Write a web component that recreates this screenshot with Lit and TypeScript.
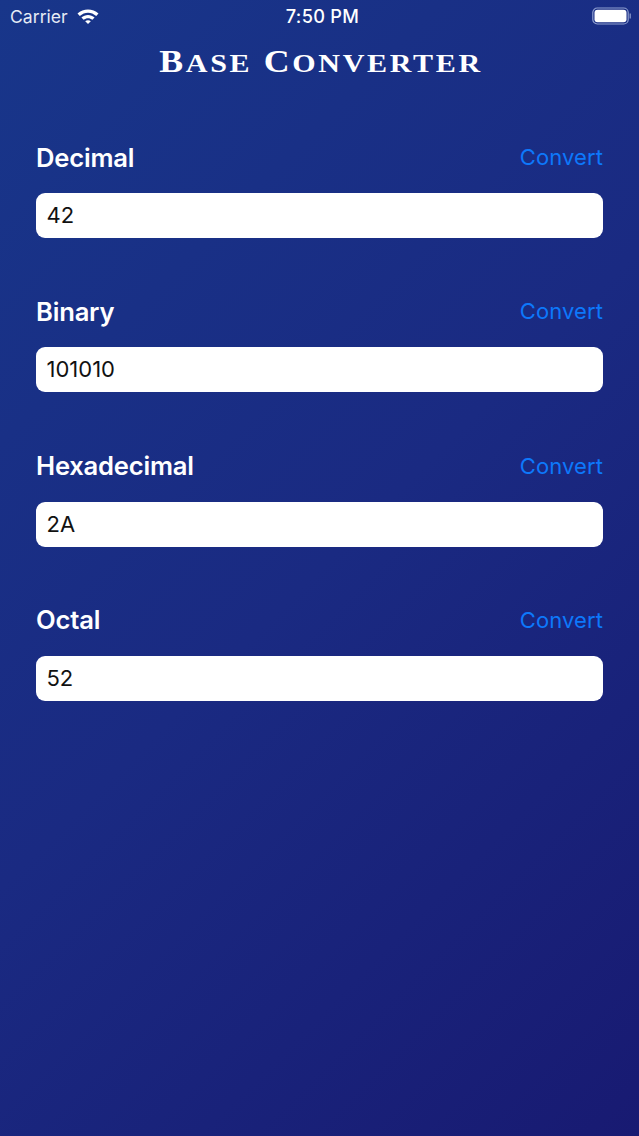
import { LitElement, html, css } from "lit";
import { customElement } from "lit/decorators.js";

const rows = [
  ["Decimal", "42"],
  ["Binary", "101010"],
  ["Hexadecimal", "2A"],
  ["Octal", "52"],
];

@customElement("app-root")
export class AppRoot extends LitElement {
  static styles = css`
    :host {
      display: block;
      width: 639px;
      height: 1136px;
      overflow: hidden;
      background: linear-gradient(135deg, #18368a 0%, #1a2a82 50%, #181a72 100%);
      font-family: Inter, "Liberation Sans", sans-serif;
      color: #fff;
    }
    .status {
      height: 32px;
      display: grid;
      grid-template-columns: 1fr auto 1fr;
      align-items: center;
      padding: 0 8px 0 10px;
      box-sizing: border-box;
    }
    .left { display: flex; align-items: center; gap: 9px; color: #e6ebf5; font-size: 17.6px; }
    .time { font-weight: 500; font-size: 18.2px; letter-spacing: 0.3px; margin-left: 4px; }
    .right { display: flex; justify-content: flex-end; }
    .title {
      margin: 12px 0 0;
      height: 36px;
      line-height: 35px;
      text-align: center;
      font-family: "Liberation Serif", serif;
      font-size: 31px;
      font-weight: 700;
      letter-spacing: 2.3px;
      transform: translateX(1.5px) scaleX(1.155);
      white-space: nowrap;
    }
    .small { font-size: 26px; }
    .form {
      display: flex;
      flex-direction: column;
      gap: 55.3px;
      padding: 59px 36px 0;
    }
    .head {
      height: 36px;
      display: flex;
      justify-content: space-between;
      align-items: center;
    }
    .label { font-size: 25.6px; font-weight: 600; letter-spacing: -0.2px; }
    .convert { font-size: 22px; color: #0d78fb; letter-spacing: 0.1px; }
    .input {
      margin-top: 18px;
      height: 45px;
      line-height: 45px;
      background: #fff;
      border-radius: 9px;
      padding: 0 10.5px;
      color: #111;
      font-size: 22px;
    }
  `;

  render() {
    return html`
      <div class="status">
        <div class="left">
          <span>Carrier</span>
          <svg width="22" height="16" viewBox="0 0 22 16">
            <path d="M0.5 5.6C6.3.2 15.700.2 21.500 5.600l-2.300 2.400C14.400 3.500 7.600 3.500 2.800 8z" fill="#fff"/>
            <path d="M4.400 9.500c3.800-3.400 9.400-3.400 13.200 0l-2.200 2.300c-2.600-2.200-6.200-2.200-8.800 0z" fill="#fff"/>
            <path d="M8.200 13.200c1.600-1.300 4-1.300 5.600 0L11 16z" fill="#fff"/>
          </svg>
        </div>
        <div class="time">7:50 PM</div>
        <div class="right">
          <svg width="39" height="18" viewBox="0 0 39 18">
            <rect x="0.8" y="1" width="35.4" height="16" rx="4.5" fill="none" stroke="#8f9fd0" stroke-width="1.2"/>
            <rect x="2.500" y="2.700" width="32" height="12.600" rx="3" fill="#fff"/>
            <rect x="37.600" y="6.500" width="1.200" height="5" fill="#8f9fd0"/>
          </svg>
        </div>
      </div>
      <h1 class="title">B<span class="small">ASE</span> C<span class="small">ONVERTER</span></h1>
      <div class="form">
        ${rows.map(
          ([l, v]) => html`
            <section>
              <div class="head">
                <span class="label">${l}</span>
                <span class="convert">Convert</span>
              </div>
              <div class="input">${v}</div>
            </section>
          `
        )}
      </div>
    `;
  }
}
